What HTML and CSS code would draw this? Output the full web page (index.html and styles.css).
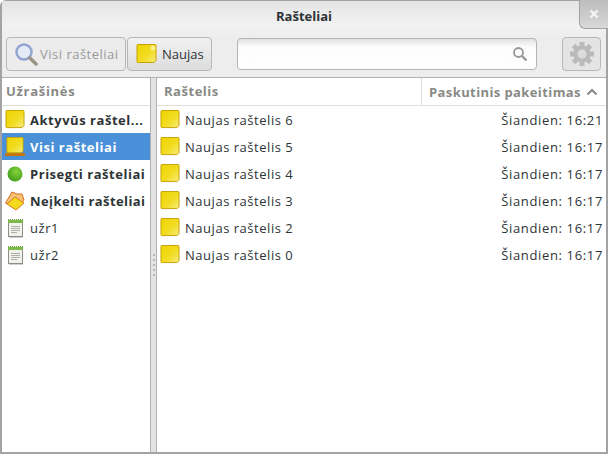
FILE: index.html
```html
<!DOCTYPE html>
<html lang="lt">

<head>
    <meta charset="UTF-8">
    <title>Rašteliai</title>
    <link rel="stylesheet" href="styles.css">
</head>

<body>
    <svg class="defs" width="0" height="0">
        <defs>
            <linearGradient id="noteFill" x1="0" y1="0" x2="1" y2="1">
                <stop offset="0" stop-color="#efd400" />
                <stop offset="0.55" stop-color="#f1dc20" />
                <stop offset="1" stop-color="#f7ec80" />
            </linearGradient>
            <radialGradient id="pinFill" cx="0.6" cy="0.35" r="0.7">
                <stop offset="0" stop-color="#86d43a" />
                <stop offset="1" stop-color="#3f9a1c" />
            </radialGradient>
            <symbol id="note" viewBox="0 0 20 20">
                <path d="M0.5 1.5a1 1 0 0 1 1-1h17a1 1 0 0 1 1 1v15l-2 2h-16a1 1 0 0 1-1-1z" fill="url(#noteFill)" stroke="#c6a000" />
            </symbol>
            <symbol id="notebook" viewBox="0 0 20 20">
                <rect x="3.5" y="3.5" width="14" height="15" fill="#f2f2ec" stroke="#8e8e84" />
                <rect x="3" y="2" width="15" height="3" fill="#7cb84a" />
                <path d="M3 1.5h15" stroke="#6a9c3c" stroke-dasharray="1 1" />
                <path d="M6 8.5h9M6 10.5h9M6 12.5h9M6 14.5h6" stroke="#b0b0a8" />
                <path d="M4 19.5h14" stroke="#d0d0d0" />
            </symbol>
        </defs>
    </svg>

    <div class="window">
        <div class="titlebar">Rašteliai</div>
        <div class="close">
            <svg width="10" height="10" viewBox="0 0 10 10">
                <path d="M1.5 1.5l7 7M8.5 1.5l-7 7" stroke="#f4f4f4" stroke-width="2.4" />
            </svg>
        </div>

        <div class="toolbar">
            <div class="btn-group">
                <div class="btn btn-disabled">
                    <svg width="24" height="26" viewBox="0 0 24 26">
                        <circle cx="10" cy="11" r="7.5" fill="#e4eaf6" stroke="#94a5cf" stroke-width="2.5" />
                        <path d="M16 17l6 6" stroke="#989484" stroke-width="3.5" stroke-linecap="round" />
                    </svg>
                    <span>Visi rašteliai</span>
                </div>
                <div class="btn btn-new">
                    <svg width="21" height="20" viewBox="0 0 21 20">
                        <use href="#note" width="21" height="20" />
                        <circle cx="17" cy="4" r="2.5" fill="#fff6b0" opacity="0.8" />
                    </svg>
                    <span>Naujas</span>
                </div>
            </div>
            <div class="search">
                <svg width="16" height="16" viewBox="0 0 16 16">
                    <circle cx="6.5" cy="6.5" r="4.5" fill="none" stroke="#989898" stroke-width="1.8" />
                    <path d="M10 10l4.5 4.5" stroke="#989898" stroke-width="2.4" />
                </svg>
            </div>
            <div class="btn btn-gear">
                <svg width="26" height="26" viewBox="0 0 26 26">
                    <g fill="#bababa">
                        <rect x="10.5" y="1" width="5" height="24" />
                        <rect x="10.5" y="1" width="5" height="24" transform="rotate(45 13 13)" />
                        <rect x="10.5" y="1" width="5" height="24" transform="rotate(90 13 13)" />
                        <rect x="10.5" y="1" width="5" height="24" transform="rotate(135 13 13)" />
                        <circle cx="13" cy="13" r="8.5" />
                    </g>
                    <circle cx="13" cy="13" r="4.5" fill="#dcdcdc" />
                </svg>
            </div>
        </div>

        <div class="panes">
            <div class="sidebar">
                <div class="head head-side">Užrašinės</div>
                <div class="side-row strong">
                    <svg width="20" height="19"><use href="#note" /></svg>
                    <span>Aktyvūs raštel...</span>
                </div>
                <div class="side-row strong selected">
                    <svg width="20" height="20" viewBox="0 0 20 20">
                        <rect x="0" y="16" width="20" height="3" rx="1" fill="#c8760c" />
                        <use href="#note" width="19" height="17" x="0.5" y="0" />
                    </svg>
                    <span>Visi rašteliai</span>
                </div>
                <div class="side-row strong">
                    <svg width="20" height="20" viewBox="0 0 20 20">
                        <circle cx="10" cy="10" r="7.5" fill="url(#pinFill)" />
                    </svg>
                    <span>Prisegti rašteliai</span>
                </div>
                <div class="side-row strong">
                    <svg width="20" height="22" viewBox="0 0 20 22">
                        <path d="M0.5 13L7 2l5 2 5 0 2 6-7 9z" fill="#f8c178" stroke="#d8701c" />
                        <path d="M2 14l8-7 9 6-8 7z" fill="#f4da1c" stroke="#d8801c" />
                    </svg>
                    <span class="tight">Neįkelti rašteliai</span>
                </div>
                <div class="side-row">
                    <svg width="20" height="20"><use href="#notebook" /></svg>
                    <span>užr1</span>
                </div>
                <div class="side-row">
                    <svg width="20" height="20"><use href="#notebook" /></svg>
                    <span>užr2</span>
                </div>
            </div>

            <div class="handle">
                <i></i><i></i><i></i><i></i><i></i>
            </div>

            <div class="list">
                <div class="list-head">
                    <div class="head col-title">Raštelis</div>
                    <div class="head col-date">
                        <span>Paskutinis pakeitimas</span>
                        <svg width="12" height="8" viewBox="0 0 12 8">
                            <path d="M1.5 6.5L6 2l4.5 4.5" fill="none" stroke="#888" stroke-width="2" />
                        </svg>
                    </div>
                </div>
                <div class="note-row">
                    <svg width="20" height="19"><use href="#note" /></svg>
                    <span class="note-title">Naujas raštelis 6</span>
                    <span class="note-date">Šiandien: 16:21</span>
                </div>
                <div class="note-row">
                    <svg width="20" height="19"><use href="#note" /></svg>
                    <span class="note-title">Naujas raštelis 5</span>
                    <span class="note-date">Šiandien: 16:17</span>
                </div>
                <div class="note-row">
                    <svg width="20" height="19"><use href="#note" /></svg>
                    <span class="note-title">Naujas raštelis 4</span>
                    <span class="note-date">Šiandien: 16:17</span>
                </div>
                <div class="note-row">
                    <svg width="20" height="19"><use href="#note" /></svg>
                    <span class="note-title">Naujas raštelis 3</span>
                    <span class="note-date">Šiandien: 16:17</span>
                </div>
                <div class="note-row">
                    <svg width="20" height="19"><use href="#note" /></svg>
                    <span class="note-title">Naujas raštelis 2</span>
                    <span class="note-date">Šiandien: 16:17</span>
                </div>
                <div class="note-row">
                    <svg width="20" height="19"><use href="#note" /></svg>
                    <span class="note-title">Naujas raštelis 0</span>
                    <span class="note-date">Šiandien: 16:17</span>
                </div>
            </div>
        </div>
    </div>
</body>

</html>
```

FILE: styles.css
```css
* {
    box-sizing: border-box;
}

html,
body {
    margin: 0;
    height: 100%;
    overflow: hidden;
}

body {
    font-family: "Open Sans", "Noto Sans", sans-serif;
    font-size: 13px;
    color: #2e3436;
    background-color: #fff;
}

.defs {
    position: absolute;
}

.window {
    position: relative;
    height: 454px;
    display: flex;
    flex-direction: column;
    background-color: #ededed;
    border: 2px solid #a3a3a3;
    border-top-width: 1px;
    border-radius: 6px 6px 0 0;
}

.titlebar {
    height: 36px;
    padding-top: 6px;
    text-align: center;
    font-weight: 700;
    line-height: 18px;
    background: linear-gradient(#e4e4e4, #f2f2f2 70%, #ededed);
}

.close {
    position: absolute;
    top: -1px;
    right: -2px;
    width: 29px;
    height: 29px;
    display: flex;
    align-items: center;
    justify-content: center;
    background: linear-gradient(#bcbcbc, #d8d8d8);
    border: 1px solid #a3a3a3;
    border-top: none;
    border-right: none;
    border-radius: 0 0 0 6px;
}

.toolbar {
    height: 40px;
    padding: 0 5px 0 4px;
    display: flex;
    align-items: flex-start;
}

.btn-group {
    display: flex;
    gap: 1px;
}

.btn {
    height: 34px;
    display: flex;
    align-items: center;
    border: 1px solid #b8b8b8;
    border-radius: 4px;
    background: linear-gradient(#f2f2f2, #dcdcdc);
}

.btn-disabled {
    width: 120px;
    padding-left: 7px;
    gap: 2px;
    color: #9a9a9a;
    background: #ececec;
    letter-spacing: 0.5px;
}

.btn-new {
    width: 85px;
    padding-left: 8px;
    gap: 5px;
}

.search {
    width: 300px;
    height: 32px;
    margin: 1px 25px 0 25px;
    padding-right: 8px;
    display: flex;
    align-items: center;
    justify-content: flex-end;
    background: linear-gradient(#e0e0e0, #fbfbfb 25%, #fff);
    border: 1px solid #b4b4b4;
    border-radius: 4px;
}

.btn-gear {
    width: 39px;
    justify-content: center;
    background: #e4e4e4;
}

.panes {
    flex: 1;
    display: flex;
    min-height: 0;
    border-top: 1px solid #b0b0b0;
}

.sidebar {
    width: 148px;
    background-color: #fff;
    letter-spacing: 0.53px;
}

.handle {
    width: 7px;
    display: flex;
    flex-direction: column;
    align-items: center;
    justify-content: center;
    gap: 3px;
    background-color: #e4e4e4;
    border-left: 1px solid #b0b0b0;
    border-right: 1px solid #b0b0b0;
}

.handle i {
    width: 2px;
    height: 2px;
    background-color: #b4b4b4;
}

.list {
    flex: 1;
    background-color: #fff;
    letter-spacing: 0.53px;
}

.head {
    height: 28px;
    line-height: 26px;
    font-weight: 700;
    color: #888a85;
    border-bottom: 1px solid #dedede;
}

.head-side {
    padding-left: 4px;
    letter-spacing: 0.7px;
}

.side-row {
    height: 27px;
    display: flex;
    align-items: center;
    gap: 5px;
    padding-left: 3px;
}

.strong {
    font-weight: 700;
}

.tight {
    letter-spacing: 0.4px;
}

.selected {
    color: #fff;
    background-color: #4a90d9;
}

.list-head {
    display: flex;
}

.col-title {
    width: 264px;
    padding-left: 7px;
}

.col-date {
    flex: 1;
    display: flex;
    align-items: center;
    gap: 5px;
    padding-left: 7px;
    letter-spacing: 0.4px;
    border-left: 1px solid #dedede;
}

.note-row {
    height: 27px;
    display: flex;
    align-items: center;
    gap: 5px;
    padding: 0 3px 0 3px;
}

.note-title {
    flex: 1;
}

.note-date {
    letter-spacing: 0.65px;
}
```
